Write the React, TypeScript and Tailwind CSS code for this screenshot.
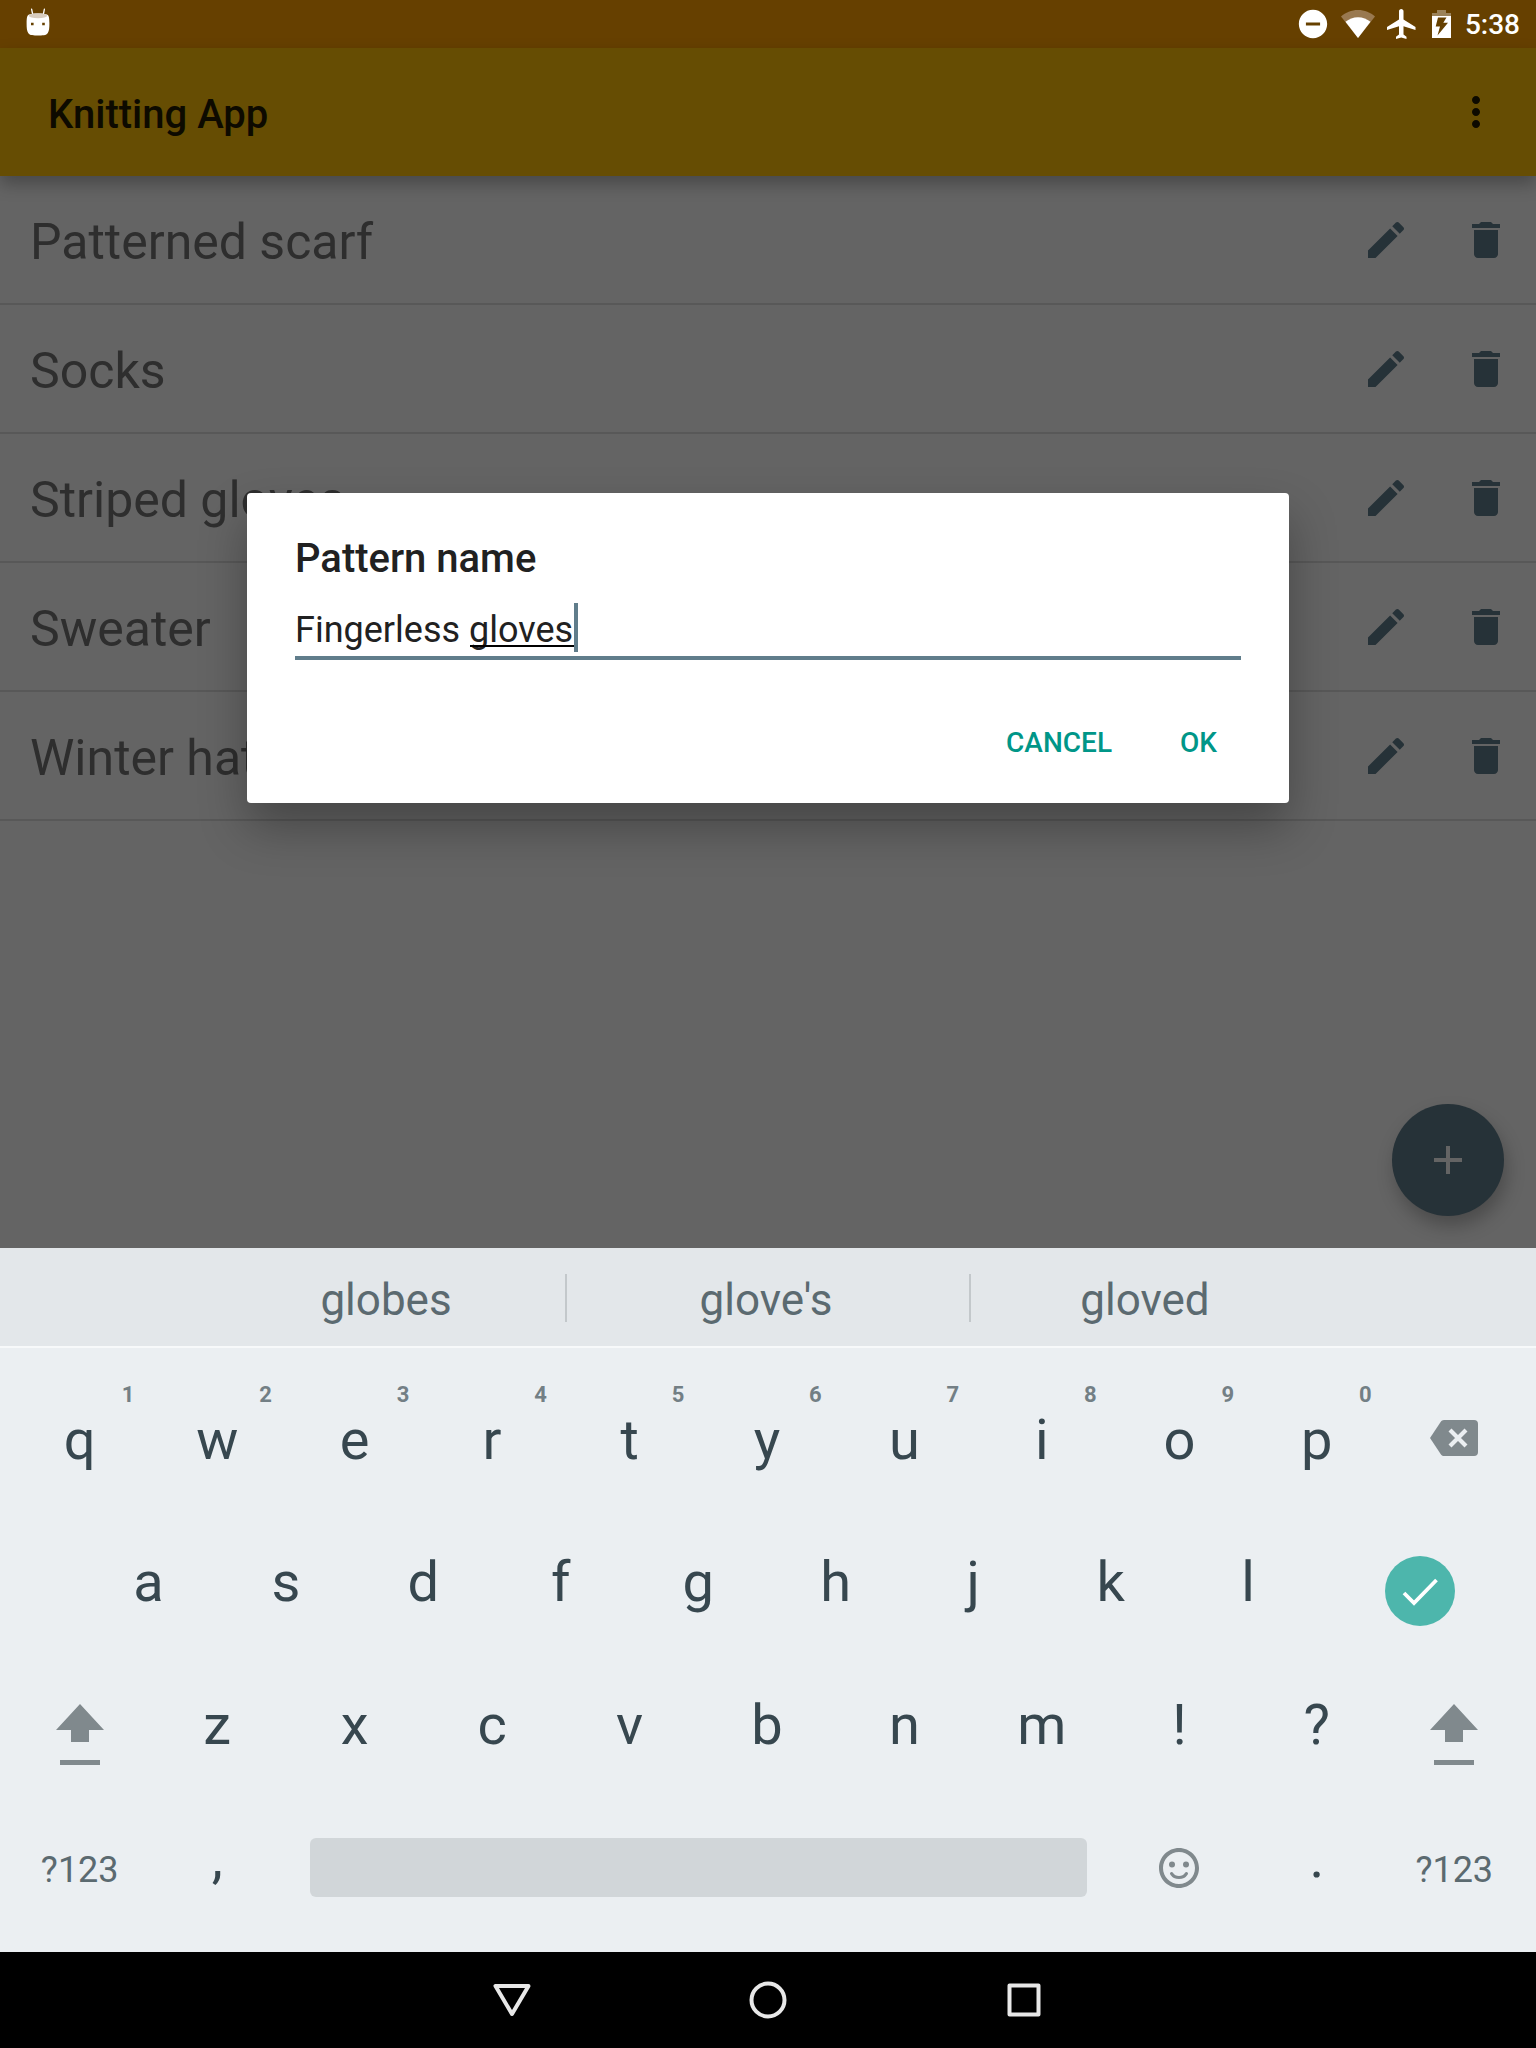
import React, { useState } from "react";

const patterns = ["Patterned scarf", "Socks", "Striped gloves", "Sweater", "Winter hat"];

const topRow = [
  ["q", "1"],
  ["w", "2"],
  ["e", "3"],
  ["r", "4"],
  ["t", "5"],
  ["y", "6"],
  ["u", "7"],
  ["i", "8"],
  ["o", "9"],
  ["p", "0"],
];
const middleRow = ["a", "s", "d", "f", "g", "h", "j", "k", "l"];
const bottomRow = ["z", "x", "c", "v", "b", "n", "m", "!", "?"];

function StatusBar() {
  return (
    <div className="flex h-12 items-center justify-between bg-[#664000] pl-[26px] pr-4 text-white">
      <svg className="mb-1 h-7 w-6" viewBox="0 0 24 28" aria-hidden="true">
        <path d="M5.6 1.2 6.6 6M18.4 1.2 17.4 6" stroke="#fff" strokeWidth="1.3" strokeLinecap="round" />
        <path
          fill="#fff"
          fillRule="evenodd"
          d="M3 6.5C6 5 18 5 21 6.5c2 .8 2.4 4 2.4 8.500 0 5-.3 8-1.600 10C20.500 27.500 16 27.500 12 27.500S3.500 27.500 2.200 25C.9 23 .6 20 .6 15 .6 10.500 1 7.300 3 6.500zM5 14.700h2.600v2.600H5zM16.200 14.700h2.600v2.600h-2.600z"
        />
        <ellipse cx="12" cy="7.700" rx="9.200" ry="2.500" fill="#d9cdbf" />
      </svg>
      <div className="flex items-center">
        <svg className="h-[34px] w-[34px]" viewBox="0 0 24 24" fill="#fff" aria-hidden="true">
          <path d="M12 2C6.480 2 2 6.480 2 12s4.480 10 10 10 10-4.480 10-10S17.520 2 12 2zm5 11H7v-2h10v2z" />
        </svg>
        <svg className="ml-2.5 h-9 w-9" viewBox="0 0 36 36" aria-hidden="true">
          <path fill="#997950" d="M18 32 1 10.500C5.500 6.500 11.500 4 18 4s12.500 2.500 17 6.500z" />
          <path fill="#fff" d="M18 32 5.500 15.800C9 13 13.300 11.200 18 11.200s9 1.800 12.500 4.600z" />
        </svg>
        <svg className="ml-2 h-9 w-9" viewBox="0 0 24 24" fill="#fff" aria-hidden="true">
          <path d="M21 16v-2l-8-5V3.500c0-.83-.67-1.500-1.500-1.500S10 2.670 10 3.500V9l-8 5v2l8-2.500V19l-2 1.500V22l3.500-1 3.500 1v-1.500L13 19v-5.500l8 2.500z" />
        </svg>
        <svg className="ml-3 h-[30px] w-[19px]" viewBox="0 0 19 30" fill="#fff" aria-hidden="true">
          <path opacity=".35" d="M5 1h9v3h5v3H0V4h5z" />
          <path fillRule="evenodd" d="M0 7h19v22H0zM6 8.500 3.700 17.500H8L5.500 26.500 16 13.800H11.300L14.500 8.500z" />
        </svg>
        <span className="ml-3.5 pt-0.5 text-[28px] font-medium leading-9">5:38</span>
      </div>
    </div>
  );
}

function AppBar() {
  return (
    <header className="relative flex h-32 items-center justify-between bg-[#664d03] pl-12 pr-9 shadow-[0_8px_16px_rgba(0,0,0,0.28)]">
      <h1 className="pt-1.5 text-[40px] font-medium leading-[48px] text-[#0d0a00]">Knitting App</h1>
      <button type="button" aria-label="More options">
        <svg className="h-12 w-12" viewBox="0 0 24 24" fill="#0d0a00">
          <path d="M12 8c1.100 0 2-.9 2-2s-.9-2-2-2-2 .9-2 2 .9 2 2 2zm0 2c-1.100 0-2 .9-2 2s.9 2 2 2 2-.9 2-2-.9-2-2-2zm0 6c-1.100 0-2 .9-2 2s.9 2 2 2 2-.9 2-2-.9-2-2-2z" />
        </svg>
      </button>
    </header>
  );
}

function PatternRow({ name }: { name: string }) {
  return (
    <li className="flex h-[129px] items-center justify-between border-b-2 border-[#585858] pl-[30px] pr-[26px]">
      <span className="pt-1 text-[50px] leading-[60px] text-[#2e2e2e]">{name}</span>
      <div className="flex gap-[52px]">
        <button type="button" aria-label={`Edit ${name}`}>
          <svg className="h-12 w-12" viewBox="0 0 24 24" fill="#263238">
            <path d="M3 17.250V21h3.750L17.810 9.940l-3.750-3.750L3 17.250zM20.710 7.040c.39-.39.39-1.020 0-1.410l-2.340-2.340c-.39-.39-1.020-.39-1.410 0l-1.830 1.830 3.750 3.750 1.830-1.830z" />
          </svg>
        </button>
        <button type="button" aria-label={`Delete ${name}`}>
          <svg className="h-12 w-12" viewBox="0 0 24 24" fill="#263238">
            <path d="M6 19c0 1.100.9 2 2 2h8c1.100 0 2-.9 2-2V7H6v12zM19 4h-3.500l-1-1h-5l-1 1H5v2h14V4z" />
          </svg>
        </button>
      </div>
    </li>
  );
}

function PatternDialog() {
  const [name, setName] = useState("Fingerless gloves");
  return (
    <div
      role="dialog"
      aria-labelledby="pattern-title"
      className="w-full max-w-[1042px] rounded bg-white px-12 pb-6 pt-[42px] shadow-[0_24px_48px_rgba(0,0,0,0.3)]"
    >
      <h2 id="pattern-title" className="text-[40px] font-medium leading-[48px] text-[#212121]">
        <label htmlFor="pattern-name">Pattern name</label>
      </h2>
      <div className="relative mt-[19px]">
        <input
          id="pattern-name"
          type="text"
          value={name}
          onChange={(e) => setName(e.target.value)}
          className="block h-[58px] w-full border-b-4 border-[#607d8b] bg-transparent pt-0.5 text-[36px] text-[#212121] outline-none"
        />
        {/* spell-check underline and caret */}
        <span className="absolute left-[175px] top-[43px] h-0.5 w-[105px] bg-black" />
        <span className="absolute left-[279px] top-px h-[49px] w-1 bg-[#607d8b]" />
      </div>
      <div className="mt-[47px] flex justify-end gap-9 pr-2">
        <button type="button" className="h-[72px] px-4 text-[28px] font-medium text-[#009688]">
          CANCEL
        </button>
        <button type="button" className="h-[72px] px-4 text-[28px] font-medium text-[#009688]">
          OK
        </button>
      </div>
    </div>
  );
}

function ShiftKey() {
  return (
    <button type="button" aria-label="Shift" className="col-span-2 flex flex-col items-center justify-center pt-5">
      <svg className="h-[62px] w-12" viewBox="0 0 48 62" fill="#80898d">
        <path d="M24 0 48 26H33v12H15V26H0z" />
        <path d="M4 56h40v5H4z" />
      </svg>
    </button>
  );
}

function Keyboard() {
  return (
    <section aria-label="Keyboard" className="bg-[#ebeff2]">
      <div className="flex h-[100px] items-center border-b-2 border-[#f7f9fa] bg-[#e3e7ea] pl-[207px] pr-[217px] text-[44px] text-[#5b6a70]">
        <button type="button" className="flex-36 pt-1.5">globes</button>
        <span className="mt-0.5 h-12 w-0.5 bg-[#c3c8cb]" />
        <button type="button" className="flex-40 pr-1 pt-1.5">glove's</button>
        <span className="mt-0.5 h-12 w-0.5 bg-[#c3c8cb]" />
        <button type="button" className="flex-35 pt-1.5">gloved</button>
      </div>
      <div className="grid auto-rows-[143px] grid-cols-[repeat(22,minmax(0,1fr))] pb-[13px] pl-[11px] pr-[13px] pt-[19px] text-[56px] leading-[68px] text-[#37474f]">
        {topRow.map(([letter, digit]) => (
          <button key={letter} type="button" className="relative col-span-2 pt-0.5">
            {letter}
            <span className="absolute right-3.5 top-3.5 text-[22px] font-bold leading-7 text-[#737f85]">{digit}</span>
          </button>
        ))}
        <button type="button" aria-label="Backspace" className="col-span-2 flex items-center justify-center pb-0.5">
          <svg className="h-9 w-12" viewBox="0 0 48 36" fill="#80898d">
            <path
              fillRule="evenodd"
              d="M14 0h30a4 4 0 0 1 4 4v28a4 4 0 0 1-4 4H14c-1.500 0-2.500-.8-3.200-1.800L0 18 10.800 1.800C11.500.8 12.500 0 14 0z"
            />
            <path d="m20 10 16 16m0-16-16 16" stroke="#ebeff2" strokeWidth="4.200" />
          </svg>
        </button>

        {middleRow.map((letter, i) => (
          <button key={letter} type="button" className={i === 0 ? "col-span-2 col-start-2" : "col-span-2"}>
            {letter}
          </button>
        ))}
        <button type="button" aria-label="Done" className="col-span-3 flex items-center justify-center pt-[18px]">
          <svg className="h-[70px] w-[70px]" viewBox="0 0 70 70">
            <circle cx="35" cy="35" r="35" fill="#4db6ac" />
            <path d="m19 37 10 10L51.500 24" fill="none" stroke="#fff" strokeWidth="3.800" />
          </svg>
        </button>

        <ShiftKey />
        {bottomRow.map((letter) => (
          <button key={letter} type="button" className="col-span-2">
            {letter}
          </button>
        ))}
        <ShiftKey />

        <button type="button" className="col-span-2 pt-1 text-[36px] text-[#5b6a70]">?123</button>
        <button type="button" className="col-span-2 pb-5">,</button>
        <button type="button" aria-label="Space" className="col-span-12 mx-6 h-[59px] self-center rounded-md bg-[#d1d6d9]" />
        <button type="button" aria-label="Emoji" className="col-span-2 flex items-center justify-center">
          <svg className="h-12 w-12" viewBox="0 0 24 24" fill="#80898d">
            <path d="M11.990 2C6.470 2 2 6.480 2 12s4.470 10 9.990 10C17.520 22 22 17.520 22 12S17.520 2 11.990 2zM12 20c-4.420 0-8-3.580-8-8s3.580-8 8-8 8 3.580 8 8-3.580 8-8 8z" />
            <circle cx="8.500" cy="10.200" r="1.500" />
            <circle cx="15.500" cy="10.200" r="1.500" />
            <path d="M8.300 14.800c1.700 2.600 5.700 2.600 7.400 0" fill="none" stroke="#80898d" strokeWidth="1.600" strokeLinecap="round" />
          </svg>
        </button>
        <button type="button" className="col-span-2 pb-5">.</button>
        <button type="button" className="col-span-2 pt-1 text-[36px] text-[#5b6a70]">?123</button>
      </div>
    </section>
  );
}

function NavBar() {
  return (
    <nav className="flex h-24 justify-center bg-black">
      <div className="grid w-1/2 grid-cols-3">
        <button type="button" aria-label="Back" className="flex items-center justify-center">
          <svg className="h-10 w-10" viewBox="0 0 40 40" fill="none" stroke="#e8e8e8" strokeWidth="4" strokeLinejoin="round">
            <path d="M3.500 6h33L20 34z" />
          </svg>
        </button>
        <button type="button" aria-label="Home" className="flex items-center justify-center">
          <svg className="h-10 w-10" viewBox="0 0 40 40" fill="none" stroke="#e8e8e8" strokeWidth="4">
            <circle cx="20" cy="20" r="16.500" />
          </svg>
        </button>
        <button type="button" aria-label="Recent apps" className="flex items-center justify-center">
          <svg className="h-10 w-10" viewBox="0 0 40 40" fill="none" stroke="#e8e8e8" strokeWidth="4" strokeLinejoin="round">
            <path d="M5.500 5.500h29v29h-29z" />
          </svg>
        </button>
      </div>
    </nav>
  );
}

export default function App() {
  return (
    <div className="flex min-h-screen flex-col bg-[#646464] font-[Roboto,sans-serif]">
      <StatusBar />
      <div className="relative flex flex-1 flex-col">
        <AppBar />
        <main className="flex-1">
          <ul>
            {patterns.map((name) => (
              <PatternRow key={name} name={name} />
            ))}
          </ul>
        </main>
        <button
          type="button"
          aria-label="Add pattern"
          className="absolute bottom-8 right-8 flex h-28 w-28 items-center justify-center rounded-full bg-[#263238] shadow-[3px_10px_18px_rgba(0,0,0,0.25)]"
        >
          <svg className="h-12 w-12" viewBox="0 0 24 24" fill="#646464">
            <path d="M19 13h-6v6h-2v-6H5v-2h6V5h2v6h6v2z" />
          </svg>
        </button>
        <div className="absolute inset-0 flex items-center justify-center">
          <PatternDialog />
        </div>
      </div>
      <Keyboard />
      <NavBar />
    </div>
  );
}
